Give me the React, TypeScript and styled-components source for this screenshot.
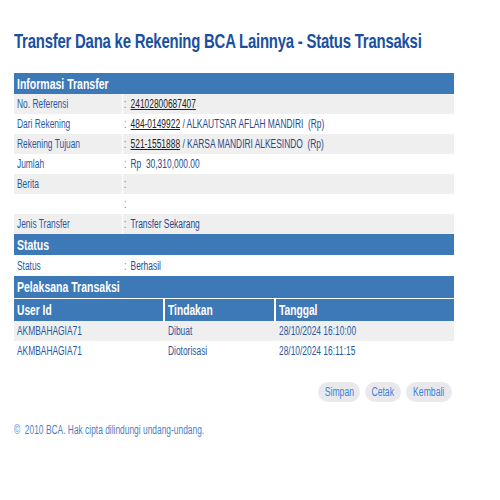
import styled, { createGlobalStyle } from "styled-components";

const GlobalStyle = createGlobalStyle`
  body {
    margin: 0;
    background: #ffffff;
    font-family: "Liberation Sans", Arial, sans-serif;
    overflow-x: hidden;
  }
`;

// the original page uses a condensed sans; Liberation Sans squeezed sideways
const Squeeze = styled.span<{ $s?: number; $center?: boolean }>`
  display: inline-block;
  white-space: pre;
  transform: scaleX(${(p) => p.$s ?? 0.7});
  transform-origin: ${(p) => (p.$center ? "50% 50%" : "0 50%")};
`;

const Page = styled.div`
  width: 440px;
  padding: 29px 0 0 14px;
  display: flex;
  flex-direction: column;
  overflow: hidden;
`;

const Title = styled.h1`
  margin: 0 0 20px;
  font-size: 21px;
  line-height: 24px;
  font-weight: 700;
  color: #1a50a0;
  letter-spacing: -0.3px;
  white-space: nowrap;
`;

const SectionHeader = styled.div<{ $h?: number }>`
  height: ${(p) => p.$h ?? 21}px;
  background: #3e79b7;
  color: #ffffff;
  font-size: 14px;
  font-weight: 700;
  display: flex;
  align-items: center;
  padding-left: 3px;
`;

const InfoRow = styled.div<{ $alt?: boolean; $h?: number }>`
  height: ${(p) => p.$h ?? 20}px;
  display: grid;
  grid-template-columns: 109px 1fr;
  background: ${(p) => (p.$alt ? "#efefef" : "#ffffff")};
  font-size: 12px;
`;

const Label = styled.div`
  display: flex;
  align-items: center;
  padding-left: 3px;
  color: #2a58a0;
  border-right: 1px solid #ffffff;
  overflow: hidden;
`;

const Value = styled.div`
  display: flex;
  align-items: center;
  padding-left: 1px;
  color: #284a8a;
  overflow: hidden;
`;

const Colon = styled.span`
  margin-right: 6px;
  color: #6b7a90;
`;

const Account = styled.span`
  color: #222222;
  text-decoration: underline;
`;

const Grid3 = styled.div<{ $alt?: boolean; $head?: boolean }>`
  display: grid;
  grid-template-columns: 151px 111px 1fr;
  height: ${(p) => (p.$head ? 22 : 20)}px;
  margin-top: ${(p) => (p.$head ? 1 : 0)}px;
  background: ${(p) => (p.$head ? "#3e79b7" : p.$alt ? "#efefef" : "#ffffff")};
  color: ${(p) => (p.$head ? "#ffffff" : "#2a58a0")};
  font-size: ${(p) => (p.$head ? 14 : 12)}px;
  font-weight: ${(p) => (p.$head ? 700 : 400)};
`;

const Cell = styled.div<{ $sep?: boolean }>`
  display: flex;
  align-items: center;
  padding-left: 3px;
  overflow: hidden;
  border-right: ${(p) => (p.$sep ? "2px solid #ffffff" : "none")};
`;

const Actions = styled.div`
  display: flex;
  justify-content: flex-end;
  gap: 5px;
  margin-top: 21px;
  padding-right: 2px;
`;

const Button = styled.button<{ $w: number }>`
  width: ${(p) => p.$w}px;
  height: 20px;
  padding: 0;
  border: none;
  border-radius: 10px;
  background: #e9e9ed;
  color: #3c82d8;
  font-family: "Liberation Sans", Arial, sans-serif;
  font-size: 12px;
  display: flex;
  align-items: center;
  justify-content: center;
  overflow: hidden;
  cursor: pointer;
`;

const Footer = styled.div`
  margin-top: 21px;
  font-size: 12px;
  color: #4a7fc6;
`;

const infoRows: { label: string; value: React.ReactNode }[] = [
  { label: "No. Referensi", value: <Account>24102800687407</Account> },
  {
    label: "Dari Rekening",
    value: (
      <>
        <Account>484-0149922</Account> / ALKAUTSAR AFLAH MANDIRI  (Rp)
      </>
    ),
  },
  {
    label: "Rekening Tujuan",
    value: (
      <>
        <Account>521-1551888</Account> / KARSA MANDIRI ALKESINDO  (Rp)
      </>
    ),
  },
  { label: "Jumlah", value: "Rp  30,310,000.00" },
  { label: "Berita", value: "" },
  { label: "", value: "" },
  { label: "Jenis Transfer", value: "Transfer Sekarang" },
];

const actors = [
  { user: "AKMBAHAGIA71", action: "Dibuat", date: "28/10/2024 16:10:00" },
  { user: "AKMBAHAGIA71", action: "Diotorisasi", date: "28/10/2024 16:11:15" },
];

const buttons = [
  { label: "Simpan", w: 42 },
  { label: "Cetak", w: 36 },
  { label: "Kembali", w: 46 },
];

export default function App() {
  return (
    <>
      <GlobalStyle />
      <Page>
        <Title>
          <Squeeze $s={0.71}>Transfer Dana ke Rekening BCA Lainnya - Status Transaksi</Squeeze>
        </Title>

        <SectionHeader>
          <Squeeze $s={0.75}>Informasi Transfer</Squeeze>
        </SectionHeader>
        {infoRows.map((r, i) => (
          <InfoRow key={i} $alt={i % 2 === 0}>
            <Label>
              <Squeeze>{r.label}</Squeeze>
            </Label>
            <Value>
              <Squeeze>
                <Colon>:</Colon>
                {r.value}
              </Squeeze>
            </Value>
          </InfoRow>
        ))}

        <SectionHeader>
          <Squeeze $s={0.75}>Status</Squeeze>
        </SectionHeader>
        <InfoRow $h={21}>
          <Label>
            <Squeeze>Status</Squeeze>
          </Label>
          <Value>
            <Squeeze>
              <Colon>:</Colon>Berhasil
            </Squeeze>
          </Value>
        </InfoRow>

        <SectionHeader $h={22}>
          <Squeeze $s={0.75}>Pelaksana Transaksi</Squeeze>
        </SectionHeader>
        <Grid3 $head>
          <Cell $sep>
            <Squeeze $s={0.73}>User Id</Squeeze>
          </Cell>
          <Cell $sep>
            <Squeeze $s={0.73}>Tindakan</Squeeze>
          </Cell>
          <Cell>
            <Squeeze $s={0.73}>Tanggal</Squeeze>
          </Cell>
        </Grid3>
        {actors.map((a, i) => (
          <Grid3 key={i} $alt={i % 2 === 0}>
            <Cell>
              <Squeeze>{a.user}</Squeeze>
            </Cell>
            <Cell>
              <Squeeze>{a.action}</Squeeze>
            </Cell>
            <Cell>
              <Squeeze>{a.date}</Squeeze>
            </Cell>
          </Grid3>
        ))}

        <Actions>
          {buttons.map((b) => (
            <Button key={b.label} $w={b.w}>
              <Squeeze $s={0.72} $center>
                {b.label}
              </Squeeze>
            </Button>
          ))}
        </Actions>

        <Footer>
          <Squeeze>©  2010 BCA. Hak cipta dilindungi undang-undang.</Squeeze>
        </Footer>
      </Page>
    </>
  );
}
